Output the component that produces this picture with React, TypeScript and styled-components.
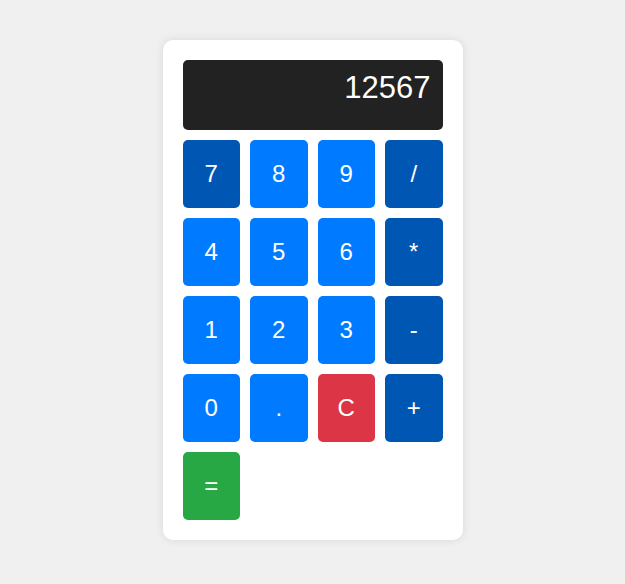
import React from "react";
import styled, { createGlobalStyle } from "styled-components";

const Global = createGlobalStyle`
  html, body { margin: 0; padding: 0; background: #f0f0f0; }
  body { font-family: "Liberation Sans", Arial, sans-serif; }
`;

const Page = styled.div`
  display: flex;
  justify-content: center;
  padding-top: 40px;
  min-height: 584px;
  box-sizing: border-box;
`;

const Card = styled.div`
  width: 300px;
  height: 500px;
  box-sizing: border-box;
  background: #fff;
  border-radius: 10px;
  box-shadow: 0 0 10px rgba(0, 0, 0, 0.1);
  padding: 20px;
  display: flex;
  flex-direction: column;
  gap: 10px;
`;

const Display = styled.div`
  height: 70px;
  box-sizing: border-box;
  background: #222;
  color: #fff;
  border-radius: 5px;
  padding: 10px 12px 10px 10px;
  text-align: right;
  font-size: 31px;
  line-height: 35px;
`;

const Grid = styled.div`
  display: grid;
  grid-template-columns: repeat(4, 1fr);
  grid-auto-rows: 68px;
  gap: 10px;
`;

type Kind = "num" | "op" | "clear" | "eq";
const colors: Record<Kind, string> = {
  num: "#007bff",
  op: "#0056b3",
  clear: "#dc3545",
  eq: "#28a745",
};

const Key = styled.button<{ $kind: Kind }>`
  border: none;
  border-radius: 5px;
  background: ${(p) => colors[p.$kind]};
  color: #fff;
  font-family: "Liberation Sans", Arial, sans-serif;
  font-size: 24px;
  padding: 0;
  display: flex;
  align-items: center;
  justify-content: center;
  cursor: pointer;
`;

const keys: { label: string; kind: Kind }[] = [
  { label: "7", kind: "op" },
  { label: "8", kind: "num" },
  { label: "9", kind: "num" },
  { label: "/", kind: "op" },
  { label: "4", kind: "num" },
  { label: "5", kind: "num" },
  { label: "6", kind: "num" },
  { label: "*", kind: "op" },
  { label: "1", kind: "num" },
  { label: "2", kind: "num" },
  { label: "3", kind: "num" },
  { label: "-", kind: "op" },
  { label: "0", kind: "num" },
  { label: ".", kind: "num" },
  { label: "C", kind: "clear" },
  { label: "+", kind: "op" },
  { label: "=", kind: "eq" },
];

export default function App() {
  return (
    <>
      <Global />
      <Page>
        <Card>
          <Display>12567</Display>
          <Grid>
            {keys.map((k) => (
              <Key key={k.label} $kind={k.kind}>
                {k.label}
              </Key>
            ))}
          </Grid>
        </Card>
      </Page>
    </>
  );
}
